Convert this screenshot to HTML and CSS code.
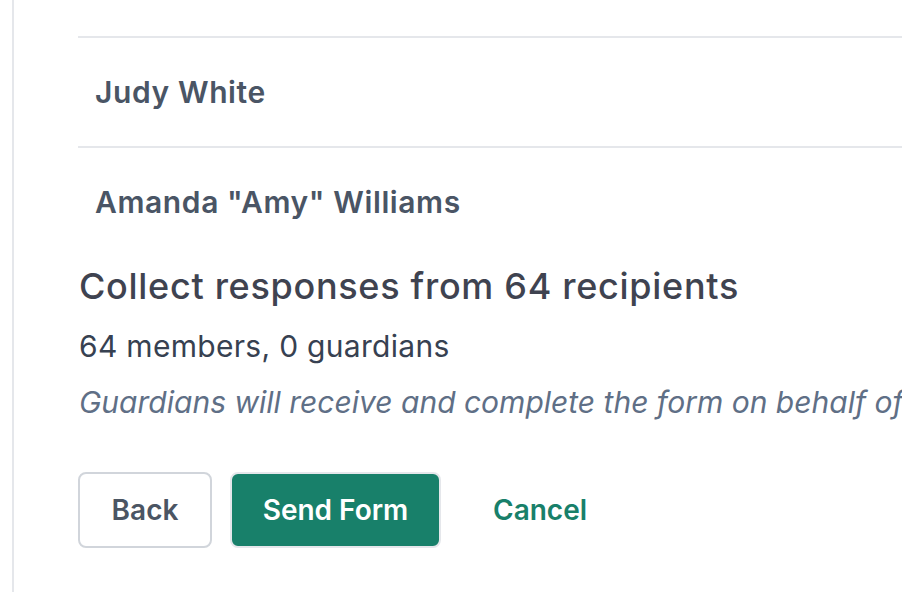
FILE: index.html
```html
<!DOCTYPE html>
<html lang="en">
<head>
<meta charset="utf-8">
<title>Send Form</title>
<link rel="stylesheet" href="styles.css">
</head>
<body>
<div class="page">
  <div class="panel">
    <div class="content">
      <ul class="recipients">
        <li class="recipient">Judy White</li>
        <li class="recipient">Amanda "Amy" Williams</li>
      </ul>
      <section class="summary">
        <h2 class="summary-title">Collect responses from 64 recipients</h2>
        <p class="summary-count">64 members, 0 guardians</p>
        <p class="summary-note">Guardians will receive and complete the form on behalf of their members.</p>
      </section>
      <div class="actions">
        <button class="btn btn-secondary" type="button">Back</button>
        <button class="btn btn-primary" type="button">Send Form</button>
        <button class="btn btn-link" type="button">Cancel</button>
      </div>
    </div>
  </div>
</div>
</body>
</html>
```
FILE: styles.css
```css
html, body {
  margin: 0;
  padding: 0;
  background: #ffffff;
  overflow: hidden;
}

body {
  font-family: "Inter", "Noto Sans", sans-serif;
  color: #374151;
}

.page {
  width: 1200px;
  height: 592px;
  padding-left: 12px;
}

.panel {
  border-left: 2px solid #e5e7eb;
  height: 100%;
  padding-left: 64px;
}

.content {
  width: 1100px;
}

.recipients {
  list-style: none;
  margin: 0;
  padding: 36px 0 0 0;
}

.recipient {
  border-top: 2px solid #e5e7eb;
  padding: 28px 17px;
  font-size: 30px;
  line-height: 52px;
  font-weight: 600;
  letter-spacing: 0.6px;
  color: #4a5565;
}

.summary {
  padding: 2px 0 0 1px;
}

.summary-title {
  margin: 0;
  font-size: 36px;
  line-height: 56px;
  font-weight: 500;
  letter-spacing: 0.7px;
  color: #3f4350;
}

.summary-count {
  margin: 12px 0 0 0;
  font-size: 30px;
  line-height: 40px;
  letter-spacing: 0.3px;
  color: #374151;
}

.summary-note {
  margin: 16px 0 0 0;
  font-size: 30px;
  line-height: 40px;
  font-style: italic;
  color: #5f6f86;
  white-space: nowrap;
}

.actions {
  display: flex;
  align-items: center;
  gap: 18px;
  margin-top: 50px;
}

.btn {
  font-family: inherit;
  font-size: 28px;
  font-weight: 600;
  height: 76px;
  border-radius: 8px;
  cursor: pointer;
}

.btn-secondary {
  width: 134px;
  background: #ffffff;
  border: 2px solid #d1d5db;
  color: #4b5563;
}

.btn-primary {
  width: 211px;
  background: #18806a;
  border: 2px solid #e5e7eb;
  color: #ffffff;
}

.btn-link {
  background: transparent;
  border: 0;
  padding: 0 34px;
  color: #18806a;
}
```
